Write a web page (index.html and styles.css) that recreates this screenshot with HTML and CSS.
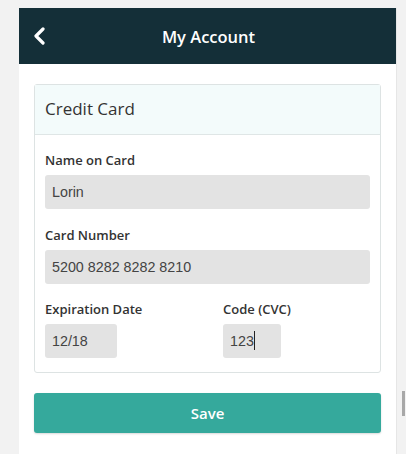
FILE: index.html
```html
<!DOCTYPE html>
<html>
<head>
<meta charset="utf-8">
<title>My Account</title>
<link rel="stylesheet" href="styles.css">
</head>
<body>
<div class="page">
  <div class="topbar">
    <a class="back" href="#">
      <svg width="14" height="18" viewBox="0 0 14 18"><path d="M11 2 L4 9 L11 16" fill="none" stroke="#fff" stroke-width="3.2" stroke-linecap="round" stroke-linejoin="round"/></svg>
    </a>
    <h1>My Account</h1>
  </div>
  <div class="content">
    <div class="card">
      <div class="card-head">Credit Card</div>
      <div class="card-body">
        <label>Name on Card</label>
        <div class="field">Lorin</div>
        <label>Card Number</label>
        <div class="field">5200 8282 8282 8210</div>
        <div class="row">
          <div class="col">
            <label>Expiration Date</label>
            <div class="field exp">12/18</div>
          </div>
          <div class="col">
            <label>Code (CVC)</label>
            <div class="field cvc">123<span class="caret"></span></div>
          </div>
        </div>
      </div>
    </div>
    <a class="save" href="#">Save</a>
  </div>
</div>
<div class="scroll-thumb"></div>
</body>
</html>
```
FILE: styles.css
```css
* { margin: 0; padding: 0; box-sizing: border-box; }
body { background: #f2f2f2; font-family: "Open Sans", sans-serif; color: #333; }
a { text-decoration: none; }

.page { width: 378px; margin: 8px 0 0 19px; background: #fff; min-height: 446px; border-right: 1px solid #e6e6e6; }

.topbar { height: 56px; background: #142f38; position: relative; display: flex; align-items: center; justify-content: center; }
.topbar h1 { color: #fff; font-size: 16.5px; font-weight: 600; margin-left: 2px; }
.back { position: absolute; left: 13px; top: 19px; display: block; width: 14px; height: 18px; }

.content { padding: 20px 15px 0 15px; }

.card { border: 1px solid #dde3e3; border-radius: 3px; }
.card-head { height: 50px; line-height: 48px; padding-left: 10px; background: #f3fbfb; border-bottom: 1px solid #dfe6e6; font-size: 17px; color: #333; }
.card-body { padding: 16px 10px 14px 10px; }

label { display: block; font-size: 13px; font-weight: 600; line-height: 18px; color: #333; margin-bottom: 6px; }
.field { height: 34px; line-height: 34px; background: #e3e3e3; border-radius: 3px; padding-left: 7px; font-family: "Liberation Sans", Arial, sans-serif; font-size: 14.3px; color: #444; margin-bottom: 17px; }

.row { display: grid; grid-template-columns: 178px 1fr; margin-top: -1px; }
.row .field { margin-bottom: 0; }
.exp { width: 72px; }
.cvc { width: 58px; }
.caret { display: inline-block; width: 1px; height: 19px; background: #222; vertical-align: -4px; }

.save { display: block; margin-top: 20px; height: 40px; line-height: 40px; text-align: center; background: #35a99c; border-radius: 3px; color: #fff; font-size: 15px; font-weight: 600; box-shadow: 0 1px 2px rgba(0,0,0,0.15); }

.scroll-thumb { position: absolute; left: 402px; top: 391px; width: 3px; height: 25px; background: #a8a8a8; }
```
